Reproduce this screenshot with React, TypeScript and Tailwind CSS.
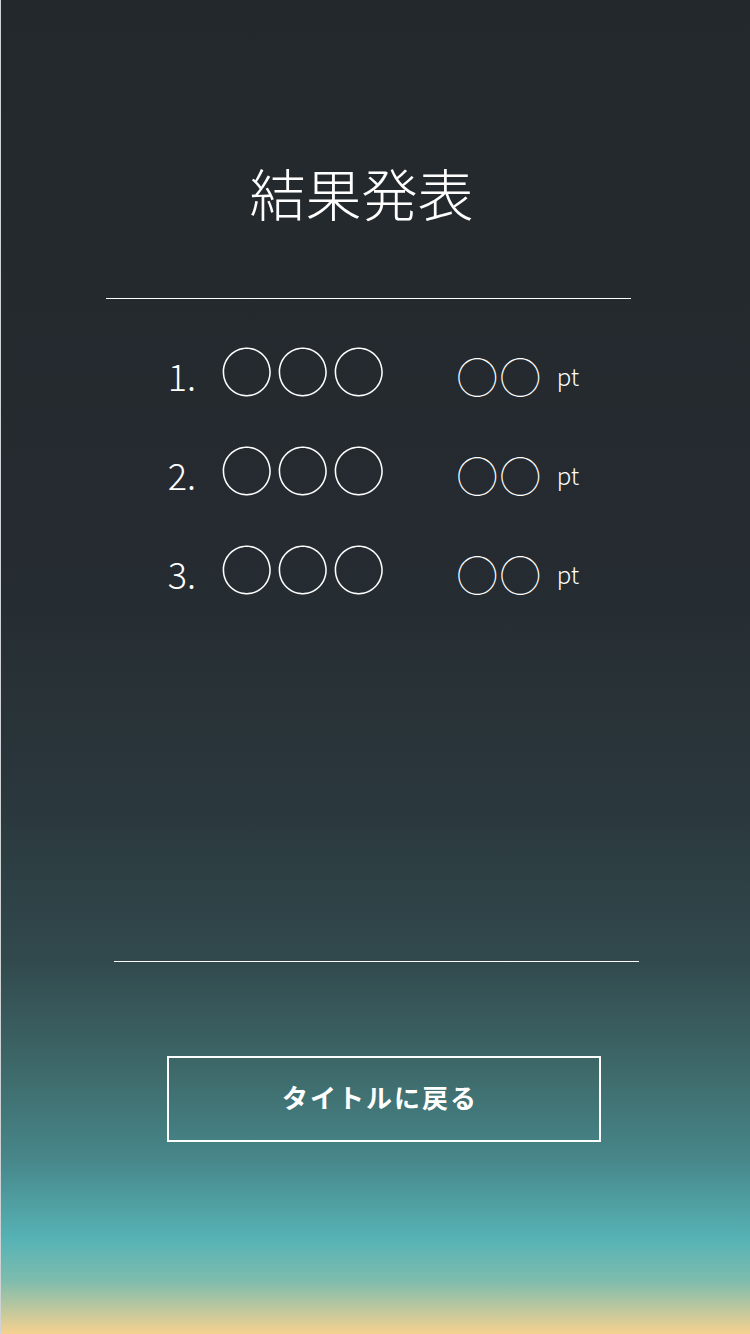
const ranking = [
  { rank: "1.", name: "◯◯◯", score: "◯◯" },
  { rank: "2.", name: "◯◯◯", score: "◯◯" },
  { rank: "3.", name: "◯◯◯", score: "◯◯" },
]

const App = () => {
  return (
    <div
      className="w-[750px] h-[1334px] border-l border-[#cfd3d6] text-white flex flex-col items-center bg-[linear-gradient(180deg,#23282c_0px,#252b30_560px,#2a373c_800px,#31494d_960px,#3d6667_1060px,#47878a_1160px,#57b3b5_1240px,#7dbcae_1280px,#f6d18f_1334px)]"
      style={{ fontFamily: '"Noto Sans CJK JP", "Noto Sans", sans-serif' }}
    >
      <h1 className="mt-[152px] text-[56px] font-light leading-[80px] ml-[-28px]">結果発表</h1>

      <div className="mt-[66px] w-[525px] h-px bg-white ml-[-14px]"></div>

      <div className="mt-[28px] flex flex-col gap-[19px] ml-[-4px]">
        {ranking.map((r) => (
          <div className="flex items-start h-[80px]" key={r.rank}>
            <span className="w-[53px] mt-[30px] text-[36px] font-light leading-none">{r.rank}</span>
            <span className="w-[236px] mt-[17px] text-[52px] tracking-[4px] font-light leading-none">{r.name}</span>
            <span className="w-[100px] mt-[28px] text-[41px] tracking-[2px] font-light leading-none">{r.score}</span>
            <span className="mt-[37px] text-[24px] font-light leading-none">pt</span>
          </div>
        ))}
      </div>

      <div className="mt-[356px] w-[525px] h-px bg-white ml-[2px]"></div>

      <button className="mt-[94px] w-[434px] h-[86px] border-2 border-white pr-[7px] pb-[6px] text-[26px] font-bold tracking-[2px] ml-[16px]">
        タイトルに戻る
      </button>
    </div>
  )
}

export default App
